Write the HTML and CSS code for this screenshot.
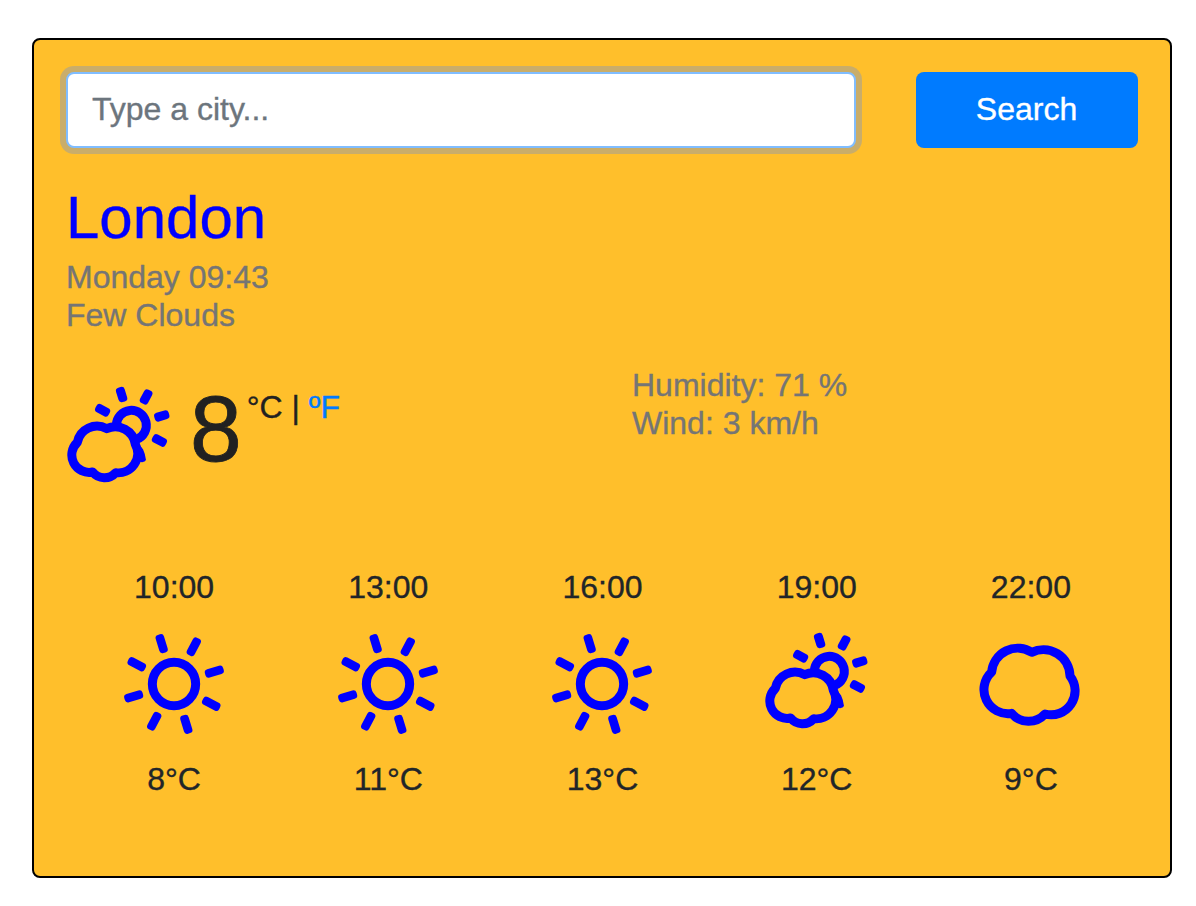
FILE: index.html
```html
<!DOCTYPE html>
<html lang="en">
<head>
<meta charset="utf-8">
<title>Weather</title>
<link rel="stylesheet" href="styles.css">
</head>
<body>
<svg class="sprite" aria-hidden="true">
  <defs>
    <g id="ray"><rect x="-13" y="-155" width="26" height="57" rx="10"/></g>
    <g id="short-ray"><rect x="-13.5" y="-119" width="27" height="45" rx="10"/></g>
    <symbol id="sun" viewBox="66 216 312 312">
      <circle class="line" cx="222" cy="372" r="65"/>
      <g class="solid" transform="translate(222 372)">
        <use href="#ray" transform="rotate(-17)"/>
        <use href="#ray" transform="rotate(28)"/>
        <use href="#ray" transform="rotate(73)"/>
        <use href="#ray" transform="rotate(118)"/>
        <use href="#ray" transform="rotate(163)"/>
        <use href="#ray" transform="rotate(208)"/>
        <use href="#ray" transform="rotate(253)"/>
        <use href="#ray" transform="rotate(298)"/>
      </g>
    </symbol>
    <symbol id="cloud" viewBox="58 216 312 312">
      <path class="line" d="M216 277A78 78 0 0 0 96 336A72 72 0 0 0 156 460A66 66 0 0 0 256 462A72 72 0 0 0 331 348A80 80 0 0 0 216 277Z"/>
    </symbol>
    <symbol id="partly" viewBox="75 216 312 312">
      <path class="line" d="M194 344A60 60 0 0 0 106 385A52 52 0 0 0 152 474A45 45 0 0 0 221 476A58 58 0 0 0 280 391A61 61 0 0 0 194 344Z"/>
      <path class="line" d="M223 333A45 45 0 1 1 284 376"/>
      <path class="solid" d="M277 378L291 384Q293 398 303 406Q309 418 312 438Q308 446 296 444L276 430Z"/>
      <g class="solid" transform="translate(267 334)">
        <use href="#short-ray" transform="rotate(-62)"/>
        <use href="#short-ray" transform="rotate(-17)"/>
        <use href="#short-ray" transform="rotate(28)"/>
        <use href="#short-ray" transform="rotate(73)"/>
        <use href="#short-ray" transform="rotate(118)"/>
      </g>
    </symbol>
  </defs>
</svg>
<main class="card">
  <form class="search">
    <input class="search-input" type="text" placeholder="Type a city...">
    <button class="search-button" type="button">Search</button>
  </form>
  <h1 class="city">London</h1>
  <ul class="details">
    <li>Monday 09:43</li>
    <li>Few Clouds</li>
  </ul>
  <section class="current">
    <div class="now">
      <svg class="icon"><use href="#partly"/></svg>
      <span class="degrees">8</span>
      <span class="units">°C | <a class="unit-link">ºF</a></span>
    </div>
    <ul class="details">
      <li>Humidity: 71 %</li>
      <li>Wind: 3 km/h</li>
    </ul>
  </section>
  <section class="forecast">
    <div class="slot"><span>10:00</span><svg class="icon"><use href="#sun"/></svg><span>8°C</span></div>
    <div class="slot"><span>13:00</span><svg class="icon"><use href="#sun"/></svg><span>11°C</span></div>
    <div class="slot"><span>16:00</span><svg class="icon"><use href="#sun"/></svg><span>13°C</span></div>
    <div class="slot"><span>19:00</span><svg class="icon"><use href="#partly"/></svg><span>12°C</span></div>
    <div class="slot"><span>22:00</span><svg class="icon"><use href="#cloud"/></svg><span>9°C</span></div>
  </section>
</main>
</body>
</html>
```
FILE: styles.css
```css
* {
  box-sizing: border-box;
}

body {
  margin: 0;
  padding: 38px 24px 0 32px;
  background: #fff;
  color: #212529;
  font: 32px/38px "Liberation Sans", Arial, sans-serif;
  -webkit-text-stroke: 0.35px;
  overflow: hidden;
}

.sprite {
  display: none;
}

.line {
  fill: none;
  stroke: #00f;
  stroke-width: 27px;
  stroke-linejoin: round;
}

.solid {
  fill: #00f;
}

.card {
  height: 840px;
  padding: 32px;
  border: 2px solid #000;
  border-radius: 8px;
  background: #ffbf2b;
}

.search {
  display: flex;
  gap: 60px;
  margin-bottom: 34px;
}

.search-input {
  width: 790px;
  height: 76px;
  padding: 0 24px 2px;
  border: 2px solid #80bdff;
  border-radius: 8px;
  outline: none;
  background: #fff;
  box-shadow: 0 0 0 6px rgba(108, 143, 215, 0.37);
  font: inherit;
  -webkit-text-stroke: inherit;
}

.search-input::placeholder {
  color: #6c757d;
  opacity: 1;
}

.search-button {
  flex: 1;
  height: 76px;
  padding: 0 1px 2px 0;
  border: 0;
  border-radius: 8px;
  background: #007bff;
  color: #fff;
  font: inherit;
  -webkit-text-stroke: inherit;
}

.city {
  margin: 0 0 4px;
  color: #00f;
  font-size: 60px;
  font-weight: 400;
  line-height: 72px;
}

.details {
  margin: 0;
  padding: 0;
  list-style: none;
  color: #757575;
}

.current {
  display: grid;
  grid-template-columns: 566px 1fr;
  height: 202px;
  padding-top: 32px;
}

.now {
  display: flex;
  align-items: flex-start;
  color: #212121;
}

.icon {
  display: block;
  width: 104px;
  height: 104px;
}

.now .icon {
  margin: 20px 0 0 1px;
}

.degrees {
  margin: 6px 5px 0 19px;
  font-size: 93px;
  line-height: 115px;
  -webkit-text-stroke-width: 0.8px;
}

.units {
  margin-top: 22px;
}

.unit-link {
  color: #007bff;
}

.forecast {
  display: grid;
  grid-template-columns: repeat(5, 1fr);
  padding: 32px 0 0 1px;
}

.slot {
  display: flex;
  flex-direction: column;
  align-items: center;
  gap: 24px;
}

.slot .icon {
  margin: 2px 0 0;
}
```
